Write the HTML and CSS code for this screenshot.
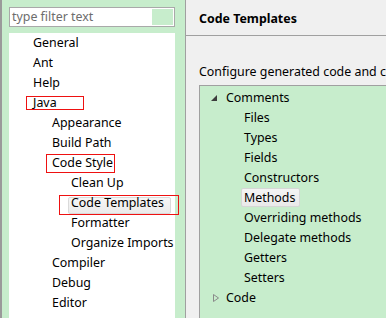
FILE: index.html
```html
<!DOCTYPE html>
<html>
<head>
<meta charset="utf-8">
<link rel="stylesheet" href="styles.css">
</head>
<body>
<div class="win">
  <aside class="left">
    <div class="filter"><span class="ph">type filter text</span><span class="clear"></span></div>
    <ul class="tree">
      <li class="row l1">General</li>
      <li class="row l1">Ant</li>
      <li class="row l1">Help</li>
      <li class="row l1"><span class="mark mark-java"></span>Java</li>
      <li class="row l2">Appearance</li>
      <li class="row l2">Build Path</li>
      <li class="row l2"><span class="mark mark-style"></span>Code Style</li>
      <li class="row l3">Clean Up</li>
      <li class="row l3"><span class="sel sel-tpl"></span><span class="mark mark-tpl"></span><span class="txt">Code Templates</span></li>
      <li class="row l3">Formatter</li>
      <li class="row l3">Organize Imports</li>
      <li class="row l2">Compiler</li>
      <li class="row l2">Debug</li>
      <li class="row l2">Editor</li>
    </ul>
  </aside>
  <main class="right">
    <header class="title">Code Templates</header>
    <p class="desc">Configure generated code and comments:</p>
    <div class="tbox">
      <ul class="ctree">
        <li class="crow open"><svg class="tw" width="8" height="8" viewBox="0 0 8 8"><polygon points="7,1 7,7 1,7" fill="#3c3c3c"/></svg>Comments</li>
        <li class="crow child">Files</li>
        <li class="crow child">Types</li>
        <li class="crow child">Fields</li>
        <li class="crow child">Constructors</li>
        <li class="crow child"><span class="csel">Methods</span></li>
        <li class="crow child">Overriding methods</li>
        <li class="crow child">Delegate methods</li>
        <li class="crow child">Getters</li>
        <li class="crow child">Setters</li>
        <li class="crow"><svg class="tw tw-c" width="8" height="10" viewBox="0 0 8 10"><polygon points="1.5,1.5 6.5,5 1.5,8.5" fill="none" stroke="#8a8a8a" stroke-width="1"/></svg>Code</li>
      </ul>
    </div>
  </main>
</div>
</body>
</html>
```

FILE: styles.css
```css
* { box-sizing: border-box; }
html, body { margin: 0; padding: 0; }
body {
  width: 386px;
  height: 318px;
  overflow: hidden;
  font-family: "Noto Sans", "Open Sans", sans-serif;
  font-size: 12.4px;
  color: #000;
  background: #f0f0f0;
}
ul { list-style: none; margin: 0; padding: 0; }
.win {
  display: flex;
  width: 386px;
  height: 318px;
}
.left {
  width: 185px;
  flex: none;
  background: #c7edcc;
  border-left: 2px solid #9a9a9a;
  padding: 7px 10px 0 7px;
  display: flex;
  flex-direction: column;
}
.filter {
  height: 20px;
  border: 1px solid #a9a9a9;
  background: #fff;
  display: flex;
  align-items: center;
  padding: 0 1px 0 2px;
}
.ph {
  flex: 1;
  color: #6d6d6d;
  line-height: 18px;
}
.clear {
  width: 21px;
  height: 16px;
  background: #c7edcc;
}
.tree {
  margin-top: 6px;
  background: #fff;
  flex: 1;
}
.row {
  position: relative;
  height: 20px;
  line-height: 20px;
  white-space: nowrap;
}
.l1 { padding-left: 24px; }
.l2 { padding-left: 43px; }
.l3 { padding-left: 62px; }
.mark {
  position: absolute;
  border: 1px solid #ee1111;
  pointer-events: none;
}
.mark-java { left: 17px; top: 3px; width: 58px; height: 14px; }
.mark-style { left: 37px; top: 1px; width: 69px; height: 19px; }
.mark-tpl { left: 50px; top: 2px; width: 120px; height: 20px; z-index: 2; }
.sel {
  position: absolute;
  border: 1px solid #dadada;
  border-radius: 2px;
  background: linear-gradient(#f6f6f6, #ebebeb);
}
.sel-tpl { left: 59px; top: 4px; width: 103px; height: 17px; }
.txt { position: relative; }
.right {
  flex: 1;
  border-left: 1px solid #a0a0a0;
  overflow: hidden;
  display: flex;
  flex-direction: column;
}
.title {
  height: 36px;
  border-bottom: 1px solid #a0a0a0;
  font-weight: bold;
  padding: 9px 0 0 13px;
  line-height: 20px;
}
.desc {
  margin: 26px 0 0 13px;
  line-height: 20px;
  white-space: nowrap;
}
.tbox {
  margin: 3px 0 0 13px;
  width: 260px;
  flex: 1;
  background: #c7edcc;
  border-left: 1px solid #a0a0a0;
  border-top: 1px solid #a0a0a0;
  padding-top: 2px;
}
.crow {
  height: 20px;
  line-height: 20px;
  padding-left: 26px;
  position: relative;
  white-space: nowrap;
}
.crow.child { padding-left: 44px; }
.tw {
  position: absolute;
  left: 10px;
  top: 6px;
}
.tw-c {
  left: 12px;
  top: 5px;
}
.csel {
  display: inline-block;
  margin-left: -3px;
  padding: 0 4px 0 2px;
  height: 19px;
  line-height: 18px;
  border: 1px solid #d6d6d6;
  border-radius: 2px;
  background: linear-gradient(#f4f4f4, #e9e9e9);
}
```
